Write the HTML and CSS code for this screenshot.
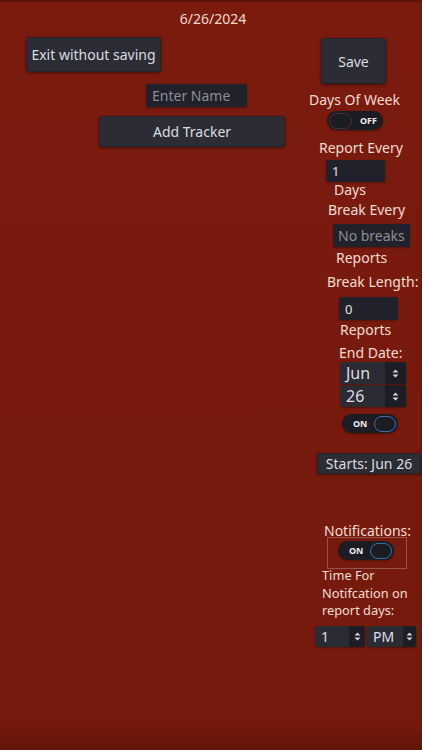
FILE: index.html
```html
<!DOCTYPE html>
<html>
<head>
<meta charset="utf-8">
<link rel="stylesheet" href="styles.css">
</head>
<body>
<div class="screen">
  <div class="date">6/26/2024</div>
  <div class="main">
    <div class="left">
      <div class="btn exit">Exit without saving</div>
      <div class="field name placeholder">Enter Name</div>
      <div class="btn add">Add Tracker</div>
    </div>
    <div class="right">
      <div class="btn save">Save</div>
      <div class="label l-dow">Days Of Week</div>
      <div class="toggle off t-dow"><span class="knob"></span><span class="tt">OFF</span></div>
      <div class="label l-rep">Report Every</div>
      <div class="field in-rep">1</div>
      <div class="label l-days">Days</div>
      <div class="label l-brk">Break Every</div>
      <div class="field in-brk placeholder">No breaks</div>
      <div class="label l-reps1">Reports</div>
      <div class="label l-blen">Break Length:</div>
      <div class="field in-blen">0</div>
      <div class="label l-reps2">Reports</div>
      <div class="label l-end">End Date:</div>
      <div class="spin big s-mon"><span class="sv">Jun</span><span class="arr"><svg width="7" height="9" viewBox="0 0 7 9"><path d="M3.5 0.5 L6.5 3.5 H0.5 Z M3.5 8.5 L6.5 5.5 H0.5 Z" fill="#d6d6da"/></svg></span></div>
      <div class="spin big s-day"><span class="sv">26</span><span class="arr"><svg width="7" height="9" viewBox="0 0 7 9"><path d="M3.5 0.5 L6.5 3.5 H0.5 Z M3.5 8.5 L6.5 5.5 H0.5 Z" fill="#d6d6da"/></svg></span></div>
      <div class="toggle on t-end"><span class="tt">ON</span><span class="knob"></span></div>
      <div class="btn starts">Starts: Jun 26</div>
      <div class="label l-notif">Notifications:</div>
      <div class="notif-box">
        <div class="toggle on"><span class="tt">ON</span><span class="knob"></span></div>
      </div>
      <div class="l-time">
        <div class="label tl">Time For</div>
        <div class="label tl">Notifcation on</div>
        <div class="label tl">report days:</div>
      </div>
      <div class="spin-row">
        <div class="spin s-hour"><span class="sv">1</span><span class="arr"><svg width="7" height="9" viewBox="0 0 7 9"><path d="M3.5 0.5 L6.5 3.5 H0.5 Z M3.5 8.5 L6.5 5.5 H0.5 Z" fill="#d6d6da"/></svg></span></div>
        <div class="spin s-ampm"><span class="sv">PM</span><span class="arr"><svg width="7" height="9" viewBox="0 0 7 9"><path d="M3.5 0.5 L6.5 3.5 H0.5 Z M3.5 8.5 L6.5 5.5 H0.5 Z" fill="#d6d6da"/></svg></span></div>
      </div>
    </div>
  </div>
</div>
</body>
</html>
```

FILE: styles.css
```css
* { box-sizing: border-box; }
html, body { margin: 0; padding: 0; }
body {
  font-family: "Noto Sans", "Open Sans", "DejaVu Sans", sans-serif;
  background: #76190d;
}
.screen {
  width: 422px;
  height: 750px;
  overflow: hidden;
  background: linear-gradient(to bottom, #7a1b0e 0%, #751a0d 96%, #63150a 100%);
  box-shadow: inset 0 2px 0 #5f1409, inset -1px 0 0 #5f1409;
}
.date {
  margin-top: 10px;
  height: 18px;
  line-height: 18px;
  font-size: 14px;
  text-align: center;
  padding-left: 4px;
  color: #f3d8cc;
}
.main {
  display: flex;
}
.left {
  width: 300px;
  display: flex;
  flex-direction: column;
  align-items: flex-start;
}
.right {
  flex: 1;
  display: flex;
  flex-direction: column;
  align-items: flex-start;
}
.btn {
  display: flex;
  align-items: center;
  justify-content: center;
  background: #2b2c34;
  border: 1px solid #23242a;
  border-radius: 3px;
  box-shadow: 0 1px 3px rgba(0,0,0,0.45);
  color: #dcdce2;
  font-size: 14px;
  white-space: nowrap;
}
.field {
  display: flex;
  align-items: center;
  padding-left: 6px;
  background: #20212a;
  border-radius: 2px;
  box-shadow: 0 1px 2px rgba(0,0,0,0.3);
  color: #e4e4e8;
  font-size: 13px;
  white-space: nowrap;
}
.field.placeholder { color: #8e8e96; font-size: 14px; }
.label {
  color: #f3dcd2;
  font-size: 14px;
  line-height: 18px;
  white-space: nowrap;
}

/* left column */
.exit { margin: 9px 0 0 26px; width: 135px; height: 35px; }
.name { margin: 12px 0 0 146px; width: 101px; height: 23px; }
.add { margin: 9px 0 0 99px; width: 186px; height: 31px; }

/* right column */
.save { margin: 10px 0 0 21px; width: 65px; height: 46px; }
.l-dow { margin: 7px 0 0 9px; }
.t-dow { margin: 2px 0 0 27px; }
.l-rep { margin: 9px 0 0 19px; }
.in-rep { margin: 3px 0 0 26px; width: 59px; height: 22px; }
.l-days { margin: -1px 0 0 34px; }
.l-brk { margin: 2px 0 0 28px; }
.in-brk { margin: 5px 0 0 33px; width: 77px; height: 23px; padding-left: 5px; }
.l-reps1 { margin: 2px 0 0 36px; }
.l-blen { margin: 6px 0 0 27px; }
.in-blen { margin: 6px 0 0 39px; width: 59px; height: 23px; }
.l-reps2 { margin: 1px 0 0 40px; }
.l-end { margin: 5px 0 0 39px; }
.s-mon { margin: 0 0 0 40px; }
.s-day { margin: 1px 0 0 40px; }
.t-end { margin: 7px 0 0 42px; }
.starts { margin: 20px 0 0 17px; width: 104px; height: 21px; border-radius: 2px; }
.l-notif { margin: 48px 0 0 24px; position: relative; }
.notif-box {
  margin: -3px 0 0 27px;
  width: 80px;
  height: 32px;
  border: 1px solid #94534b;
  padding: 3px 0 0 10px;
}
.l-time { margin: -2px 0 0 22px; display: flex; flex-direction: column; }
.l-time .tl { height: 17.5px; line-height: 17.5px; font-size: 12.8px; }
.spin-row { display: flex; gap: 2px; margin: 6px 0 0 15px; }

/* toggle */
.toggle {
  width: 56px;
  height: 19px;
  border-radius: 10px;
  background: #1c1d23;
  box-shadow: 0 1px 2px rgba(0,0,0,0.35);
  display: flex;
  align-items: center;
  padding: 0 2px;
}
.toggle .knob {
  width: 23px;
  height: 16px;
  border-radius: 8px;
  border: 1px solid #4b2e2e;
  background: #1c1d23;
}
.toggle .tt {
  font-size: 9px;
  font-weight: bold;
  color: #ececf0;
  line-height: 19px;
}
.toggle.off .tt { margin-left: 8px; }
.toggle.on .tt { margin-left: 9px; margin-right: 7px; }
.toggle.on .knob { border-color: #3a6ea5; }

/* spin boxes */
.spin {
  display: flex;
  height: 21px;
  background: #2a2b33;
  border-radius: 2px;
  overflow: hidden;
  box-shadow: 0 1px 2px rgba(0,0,0,0.3);
}
.spin .sv {
  flex: 1;
  display: flex;
  align-items: center;
  padding-left: 6px;
  color: #dedee4;
  font-size: 14px;
}
.spin .arr {
  width: 17px;
  background: #1d1e25;
  display: flex;
  align-items: center;
  justify-content: center;
}
.spin.big { width: 66px; height: 22px; }
.spin.big .sv { font-size: 16px; padding-left: 6px; }
.spin.big .arr { width: 21px; }
.s-hour { width: 50px; }
.s-ampm { width: 49px; }
.s-hour .arr { width: 16px; }
.s-ampm .arr { width: 13px; }
```
